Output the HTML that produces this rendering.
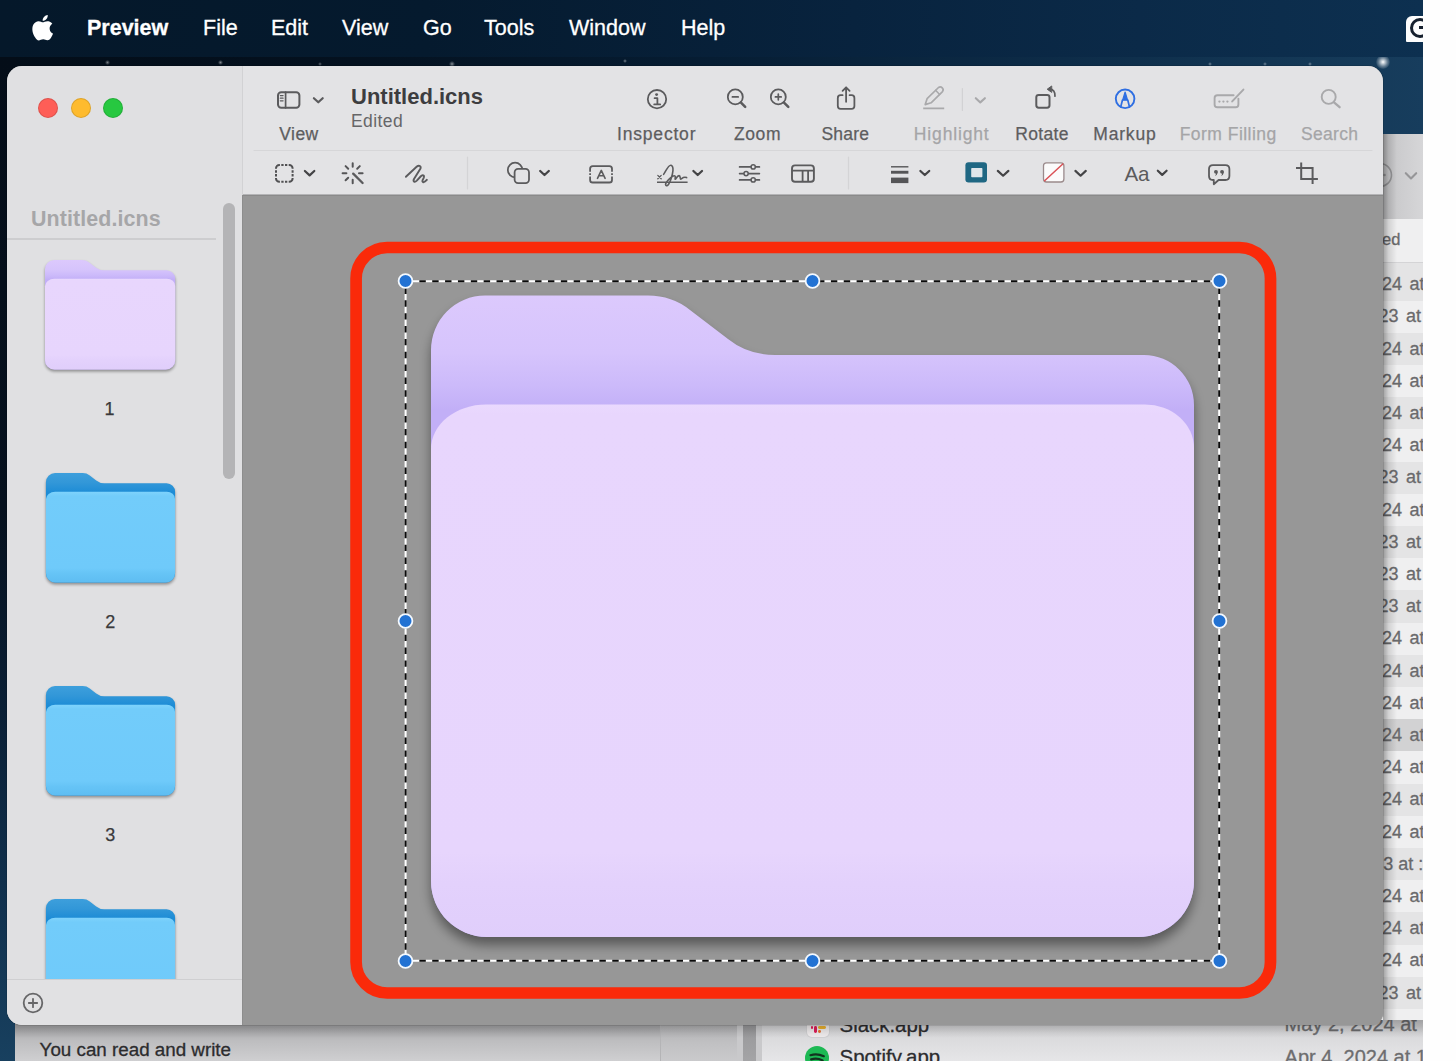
<!DOCTYPE html>
<html>
<head>
<meta charset="utf-8">
<title>Preview</title>
<style>
*{box-sizing:border-box;margin:0;padding:0}
html,body{width:1456px;height:1061px;overflow:hidden}
body{font-family:"Liberation Sans",sans-serif;background:#06182b;position:relative}
.abs{position:absolute}
#wall{left:0;top:0;width:1423px;height:1061px;background:linear-gradient(90deg,#030d18 0%,#04111f 25%,#061d33 50%,#0d2c48 75%,#143856 92%,#173d5d 100%)}
#wallL{left:0;top:56px;width:16px;height:1005px;background:linear-gradient(180deg,#040d18 0%,#06111e 45%,#0a1f35 65%,#11324f 85%,#18405f 100%)}
#menubar{left:0;top:0;width:1423px;height:56.5px;background:linear-gradient(90deg,#05182a 0%,#051a2e 30%,#08233e 60%,#0b2a48 80%,#0d3050 100%)}
#menubar span{position:absolute;top:16px;color:#fff;-webkit-text-stroke:.3px #fff;font-size:21.5px;line-height:24px;white-space:nowrap}
#whitestrip{left:1423px;top:0;width:33px;height:1061px;background:#fefefe}
/* finder behind */
#finderR{left:1370px;top:134px;width:53px;height:927px;background:#f4f4f5;overflow:hidden}
#finderB{left:15px;top:1020px;width:1408px;height:41px;background:#e9e9ea;overflow:hidden}
/* window */
#win{left:7px;top:66px;width:1376px;height:959px;border-radius:15px 15px 12px 15px;overflow:hidden;background:#979797;box-shadow:0 0 0 1px rgba(0,0,0,.10)}
#sidebar{left:0;top:0;width:235px;height:959px;background:#e0e0e2}
#toolbar{left:235px;top:0;width:1141px;height:129px;background:#e3e3e5;box-shadow:inset 1px 0 0 #d2d2d4,inset 0 -1px 0 #b4b4b6}
#canvas{left:235px;top:129px;width:1141px;height:830px;background:#979797;box-shadow:inset 1px 0 0 #8d8d8d,inset 0 1px 0 #8a8a8a}
.tl{position:absolute;top:32px;width:20px;height:20px;border-radius:50%;box-shadow:inset 0 0 0 1px rgba(0,0,0,.13)}
.lbl{position:absolute;-webkit-text-stroke:.25px currentColor;font-size:17.5px;line-height:20px;color:#5d5d5f;white-space:nowrap;transform:translateX(-50%)}
.dim{color:#a5a5a7}
.fr{font-size:18px;line-height:24px;color:#6a6a6c;white-space:nowrap;word-spacing:2.5px;-webkit-text-stroke:.3px currentColor}
.fb{line-height:24px;white-space:nowrap;-webkit-text-stroke:.3px currentColor}
</style>
</head>
<body>
<div id="wall" class="abs"></div>
<div id="wallL" class="abs"></div>
<div class="abs" style="left:104.5px;top:59.5px;width:5.0px;height:5.0px;border-radius:50%;background:radial-gradient(circle,rgba(255,255,255,0.45) 0,rgba(255,255,255,0.16) 45%,rgba(255,255,255,0) 75%)"></div>
<div class="abs" style="left:217.5px;top:59.5px;width:5.0px;height:5.0px;border-radius:50%;background:radial-gradient(circle,rgba(255,255,255,0.5) 0,rgba(255,255,255,0.17) 45%,rgba(255,255,255,0) 75%)"></div>
<div class="abs" style="left:318px;top:62px;width:4px;height:4px;border-radius:50%;background:radial-gradient(circle,rgba(255,255,255,0.35) 0,rgba(255,255,255,0.12) 45%,rgba(255,255,255,0) 75%)"></div>
<div class="abs" style="left:449px;top:61px;width:6px;height:6px;border-radius:50%;background:radial-gradient(circle,rgba(255,255,255,0.5) 0,rgba(255,255,255,0.17) 45%,rgba(255,255,255,0) 75%)"></div>
<div class="abs" style="left:623px;top:59px;width:4px;height:4px;border-radius:50%;background:radial-gradient(circle,rgba(255,255,255,0.45) 0,rgba(255,255,255,0.16) 45%,rgba(255,255,255,0) 75%)"></div>
<div class="abs" style="left:1208px;top:62px;width:4px;height:4px;border-radius:50%;background:radial-gradient(circle,rgba(255,255,255,0.4) 0,rgba(255,255,255,0.14) 45%,rgba(255,255,255,0) 75%)"></div>
<div class="abs" style="left:1263px;top:62px;width:4px;height:4px;border-radius:50%;background:radial-gradient(circle,rgba(255,255,255,0.4) 0,rgba(255,255,255,0.14) 45%,rgba(255,255,255,0) 75%)"></div>
<div class="abs" style="left:1308px;top:62px;width:4px;height:4px;border-radius:50%;background:radial-gradient(circle,rgba(255,255,255,0.4) 0,rgba(255,255,255,0.14) 45%,rgba(255,255,255,0) 75%)"></div>
<div class="abs" style="left:1375.5px;top:54.5px;width:14px;height:14px;border-radius:50%;background:radial-gradient(circle,rgba(255,255,255,1) 0,rgba(255,255,255,0.35) 45%,rgba(255,255,255,0) 75%)"></div>
<div id="menubar" class="abs">
  <svg class="abs" style="left:30.4px;top:15.2px" width="25.4" height="25.4" viewBox="0 0 24 24"><path fill="#fff" d="M12.152 6.896c-.948 0-2.415-1.078-3.96-1.04-2.04.027-3.91 1.183-4.961 3.014-2.117 3.675-.546 9.103 1.519 12.09 1.013 1.454 2.208 3.09 3.792 3.039 1.52-.065 2.09-.987 3.935-.987 1.831 0 2.35.987 3.96.948 1.637-.026 2.676-1.48 3.676-2.948 1.156-1.688 1.636-3.325 1.662-3.415-.039-.013-3.182-1.221-3.22-4.857-.026-3.04 2.48-4.494 2.597-4.559-1.429-2.09-3.623-2.324-4.39-2.376-2-.156-3.675 1.09-4.61 1.09zM15.53 3.83c.843-1.012 1.4-2.427 1.245-3.83-1.207.052-2.662.805-3.532 1.818-.78.896-1.454 2.338-1.273 3.714 1.338.104 2.715-.688 3.559-1.701"/></svg>
  <div class="abs" style="left:1405.6px;top:15.8px;width:17.4px;height:26.2px;background:#fdfdfd;border-radius:6px 0 0 1px;overflow:hidden"><div class="abs" style="left:4.6px;top:2.6px;width:20px;height:20px;border:3px solid #16202e;border-radius:50%"></div><div class="abs" style="left:13.5px;top:10.6px;width:6px;height:3px;background:#16202e"></div></div>
  <span style="left:87px;font-weight:bold">Preview</span>
  <span style="left:203px">File</span>
  <span style="left:271px">Edit</span>
  <span style="left:342px">View</span>
  <span style="left:423px">Go</span>
  <span style="left:484px">Tools</span>
  <span style="left:569px">Window</span>
  <span style="left:681px">Help</span>
</div>
<div id="finderR" class="abs">
<div class="abs" style="left:0;top:0;width:53px;height:84.5px;background:linear-gradient(90deg,#c4c4c6 0,#cacacc 45%,#d6d6d8 100%)"></div>
<svg class="abs" style="left:0;top:26px" width="53" height="30" viewBox="1370 160 53 30" fill="none" stroke="#969698" stroke-width="2.1" stroke-linecap="round" stroke-linejoin="round"><circle cx="1380" cy="175" r="11.5" stroke-width="1.6"/><circle cx="1384.5" cy="175" r="1.3" fill="#969698" stroke="none"/><path d="M1405.8 173.2L1411 178.4L1416.2 173.2"/></svg>
<div class="abs" style="left:0;top:84.5px;width:53px;height:44.5px;background:#efeff0;border-bottom:1.3px solid #d4d4d6"></div>
<div class="abs fr" style="left:12.1px;top:92.9px;font-size:16.5px;word-spacing:0">ed</div>
<div class="abs" style="left:0;top:129.0px;width:53px;height:37.6px;background:#e4e4e5"></div>
<div class="abs fr" style="left:12px;top:138.1px">24 at</div>
<div class="abs" style="left:0;top:166.6px;width:53px;height:32.2px;background:#efeff0"></div>
<div class="abs fr" style="left:8.5px;top:170.3px">23 at</div>
<div class="abs" style="left:0;top:198.8px;width:53px;height:32.2px;background:#e4e4e5"></div>
<div class="abs fr" style="left:12px;top:202.5px">24 at</div>
<div class="abs" style="left:0;top:231.0px;width:53px;height:32.2px;background:#efeff0"></div>
<div class="abs fr" style="left:12px;top:234.7px">24 at</div>
<div class="abs" style="left:0;top:263.2px;width:53px;height:32.2px;background:#e4e4e5"></div>
<div class="abs fr" style="left:12px;top:266.9px">24 at</div>
<div class="abs" style="left:0;top:295.4px;width:53px;height:32.2px;background:#efeff0"></div>
<div class="abs fr" style="left:12px;top:299.1px">24 at</div>
<div class="abs" style="left:0;top:327.6px;width:53px;height:32.2px;background:#e4e4e5"></div>
<div class="abs fr" style="left:8.5px;top:331.3px">23 at</div>
<div class="abs" style="left:0;top:359.8px;width:53px;height:32.2px;background:#efeff0"></div>
<div class="abs fr" style="left:12px;top:363.5px">24 at</div>
<div class="abs" style="left:0;top:392.0px;width:53px;height:32.2px;background:#e4e4e5"></div>
<div class="abs fr" style="left:8.5px;top:395.7px">23 at</div>
<div class="abs" style="left:0;top:424.2px;width:53px;height:32.2px;background:#efeff0"></div>
<div class="abs fr" style="left:8.5px;top:427.9px">23 at</div>
<div class="abs" style="left:0;top:456.4px;width:53px;height:32.2px;background:#e4e4e5"></div>
<div class="abs fr" style="left:8.5px;top:460.1px">23 at</div>
<div class="abs" style="left:0;top:488.6px;width:53px;height:32.2px;background:#efeff0"></div>
<div class="abs fr" style="left:12px;top:492.3px">24 at</div>
<div class="abs" style="left:0;top:520.8px;width:53px;height:32.2px;background:#e4e4e5"></div>
<div class="abs fr" style="left:12px;top:524.5px">24 at</div>
<div class="abs" style="left:0;top:553.0px;width:53px;height:32.2px;background:#efeff0"></div>
<div class="abs fr" style="left:12px;top:556.7px">24 at</div>
<div class="abs" style="left:0;top:585.2px;width:53px;height:32.2px;background:#d2d2d3"></div>
<div class="abs fr" style="left:12px;top:588.9px">24 at</div>
<div class="abs" style="left:0;top:617.4px;width:53px;height:32.2px;background:#efeff0"></div>
<div class="abs fr" style="left:12px;top:621.1px">24 at</div>
<div class="abs" style="left:0;top:649.6px;width:53px;height:32.2px;background:#e4e4e5"></div>
<div class="abs fr" style="left:12px;top:653.3px">24 at</div>
<div class="abs" style="left:0;top:681.8px;width:53px;height:32.2px;background:#efeff0"></div>
<div class="abs fr" style="left:12px;top:685.5px">24 at</div>
<div class="abs" style="left:0;top:714.0px;width:53px;height:32.2px;background:#e4e4e5"></div>
<div class="abs fr" style="left:3.2px;word-spacing:0;top:717.7px">23 at :</div>
<div class="abs" style="left:0;top:746.2px;width:53px;height:32.2px;background:#efeff0"></div>
<div class="abs fr" style="left:12px;top:749.9px">24 at</div>
<div class="abs" style="left:0;top:778.4px;width:53px;height:32.2px;background:#e4e4e5"></div>
<div class="abs fr" style="left:12px;top:782.1px">24 at</div>
<div class="abs" style="left:0;top:810.6px;width:53px;height:32.2px;background:#efeff0"></div>
<div class="abs fr" style="left:12px;top:814.3px">24 at</div>
<div class="abs" style="left:0;top:842.8px;width:53px;height:32.2px;background:#e4e4e5"></div>
<div class="abs fr" style="left:8.5px;top:846.5px">23 at</div>
<div class="abs" style="left:0;top:875.0px;width:53px;height:32.2px;background:#efeff0"></div>
<div class="abs" style="left:0;top:907.2px;width:53px;height:32.2px;background:#e4e4e5"></div>
<div class="abs" style="left:13px;top:0;width:14px;height:927px;background:linear-gradient(90deg,rgba(0,0,0,.33),rgba(0,0,0,.12) 40%,rgba(0,0,0,0))"></div>
</div>
<div id="finderB" class="abs">
  <div class="abs" style="left:0;top:0;width:645px;height:41px;background:linear-gradient(180deg,#a2a2a4 0,#a6a6a8 18%,#bdbdbf 50%,#cfcfd1 100%)"></div>
  <div class="abs" style="left:645px;top:0;width:83px;height:41px;background:linear-gradient(180deg,#a8a8aa 0,#b4b4b6 22%,#c0c0c2 55%,#cacacc 100%);border-left:1px solid #b4b4b6"></div>
  <div class="abs" style="left:722px;top:0;width:26px;height:41px;background:#c9c9cb"></div>
  <div class="abs" style="left:728.3px;top:0;width:12.4px;height:41px;background:linear-gradient(180deg,#969698,#a4a4a6)"></div>
  <div class="abs" style="left:747px;top:0;width:661px;height:41px;background:linear-gradient(180deg,#cfcfd1 0,#d8d8da 30%,#e6e6e8 100%)"></div>
  <div class="abs fb" style="left:24.6px;top:17.6px;font-size:18.8px;color:#2c2c2e">You can read and write</div>
  <div class="abs" style="left:792px;top:-5px;width:22px;height:22.4px;border-radius:5px;background:#efeced;box-shadow:0 0 0 1px #d0d0d2"></div>
  <div class="abs" style="left:795.6px;top:6.2px;width:2.6px;height:2.6px;background:#e01e5a;border-radius:1.3px"></div>
  <div class="abs" style="left:799.4px;top:6.2px;width:2.8px;height:6.6px;background:#e01e5a;border-radius:1.4px"></div>
  <div class="abs" style="left:803.4px;top:6.2px;width:7.4px;height:2.8px;background:#ecb22e;border-radius:1.4px"></div>
  <div class="abs" style="left:803.4px;top:10px;width:2.8px;height:2.8px;background:#e9722e;border-radius:1.4px"></div>
  <div class="abs fb" style="left:824.6px;top:-6.6px;font-size:20.4px;color:#2c2c2e">Slack.app</div>
  <div class="abs" style="left:790px;top:25.6px;width:24px;height:24px;border-radius:50%;background:#1db954"></div>
  <svg class="abs" style="left:790px;top:25.6px" width="24" height="24" viewBox="0 0 24 24" fill="none" stroke="#12321f" stroke-width="2.2" stroke-linecap="round"><path d="M5.5 9.2Q12 7 18.8 10.2M6.2 13.4Q12 11.6 17.6 14.4"/></svg>
  <div class="abs fb" style="left:824.6px;top:25px;font-size:20.4px;color:#2c2c2e">Spotify.app</div>
  <div class="abs fb" style="left:1269.6px;top:-8.5px;font-size:20px;color:#6d6d6f">May 2, 2024 at</div>
  <div class="abs fb" style="left:1269.6px;top:24.5px;font-size:20px;color:#6d6d6f">Apr 4, 2024 at 1</div>
  <div class="abs" style="left:0;top:0;width:1408px;height:18px;background:linear-gradient(180deg,rgba(0,0,0,.22) 0,rgba(0,0,0,.16) 35%,rgba(0,0,0,.05) 75%,rgba(0,0,0,0) 100%)"></div>
</div>
<div id="whitestrip" class="abs"></div>

<div id="win" class="abs">
  <div id="sidebar" class="abs">
    <div class="tl" style="left:31px;background:#fe5e57"></div>
    <div class="tl" style="left:64px;background:#febb2e"></div>
    <div class="tl" style="left:96px;background:#27c840"></div>
    <div class="abs" style="left:24px;top:140.6px;font-size:21.4px;line-height:24px;font-weight:bold;color:#a6a6a8;letter-spacing:.1px">Untitled.icns</div>
    <div class="abs" style="left:0;top:172.4px;width:209px;height:1.5px;background:#cdcdcf"></div>
    <div class="abs" style="left:215.5px;top:137px;width:12.5px;height:276px;border-radius:7px;background:#b4b4b6"></div>
    <svg class="abs" width="0" height="0" style="left:0;top:0"><defs>
      <linearGradient id="bBack" x1="0" y1="295" x2="0" y2="410" gradientUnits="userSpaceOnUse"><stop offset="0" stop-color="#3d9fdc"/><stop offset=".5" stop-color="#3297d8"/><stop offset="1" stop-color="#1d8cd6"/></linearGradient>
      <linearGradient id="bFront" x1="0" y1="404" x2="0" y2="937" gradientUnits="userSpaceOnUse"><stop offset="0" stop-color="#7fd3fc"/><stop offset=".05" stop-color="#72ccfa"/><stop offset=".84" stop-color="#6fcafa"/><stop offset=".9" stop-color="#66c4f6"/><stop offset="1" stop-color="#5ebdf2"/></linearGradient>
      <filter id="tsh" x="-10%" y="-10%" width="120%" height="130%"><feGaussianBlur stdDeviation="9"/><feOffset dy="10"/></filter>
    </defs></svg>
    <svg class="abs" style="left:32.4px;top:188.3px" width="142.2" height="121" viewBox="396 260 833 709.1">
      <path d="M431 350 A54 54.5 0 0 1 485 295.5 L648 295.5 Q672 295.5 690 310 L728 339 Q748 355 775 355 L1144 355 A50 50 0 0 1 1194 405 L1194 881 A56 56 0 0 1 1138 937 L487 937 A56 56 0 0 1 431 881 Z" fill="#000" opacity=".38" filter="url(#tsh)"/>
      <path d="M431 350 A54 54.5 0 0 1 485 295.5 L648 295.5 Q672 295.5 690 310 L728 339 Q748 355 775 355 L1144 355 A50 50 0 0 1 1194 405 L1194 881 A56 56 0 0 1 1138 937 L487 937 A56 56 0 0 1 431 881 Z" fill="url(#gBack)"/>
      <path d="M431 449 A55 44.5 0 0 1 486 404.5 L1145 404.5 A49 43.5 0 0 1 1194 448 L1194 881 A56 56 0 0 1 1138 937 L487 937 A56 56 0 0 1 431 881 Z" fill="url(#gFront)"/>
    </svg>
    <div class="lbl" style="left:102.5px;top:333px;color:#3a3a3c;font-size:18px">1</div>
    <svg class="abs" style="left:33.2px;top:401.3px" width="141" height="121" viewBox="396 260 833 709.1" preserveAspectRatio="none">
      <path d="M431 350 A54 54.5 0 0 1 485 295.5 L648 295.5 Q672 295.5 690 310 L728 339 Q748 355 775 355 L1144 355 A50 50 0 0 1 1194 405 L1194 881 A56 56 0 0 1 1138 937 L487 937 A56 56 0 0 1 431 881 Z" fill="#000" opacity=".38" filter="url(#tsh)"/>
      <path d="M431 350 A54 54.5 0 0 1 485 295.5 L648 295.5 Q672 295.5 690 310 L728 339 Q748 355 775 355 L1144 355 A50 50 0 0 1 1194 405 L1194 881 A56 56 0 0 1 1138 937 L487 937 A56 56 0 0 1 431 881 Z" fill="url(#bBack)"/>
      <path d="M431 449 A55 44.5 0 0 1 486 404.5 L1145 404.5 A49 43.5 0 0 1 1194 448 L1194 881 A56 56 0 0 1 1138 937 L487 937 A56 56 0 0 1 431 881 Z" fill="url(#bFront)"/>
    </svg>
    <div class="lbl" style="left:103.2px;top:546px;color:#3a3a3c;font-size:18px">2</div>
    <svg class="abs" style="left:33.2px;top:614.3px" width="141" height="121" viewBox="396 260 833 709.1" preserveAspectRatio="none">
      <path d="M431 350 A54 54.5 0 0 1 485 295.5 L648 295.5 Q672 295.5 690 310 L728 339 Q748 355 775 355 L1144 355 A50 50 0 0 1 1194 405 L1194 881 A56 56 0 0 1 1138 937 L487 937 A56 56 0 0 1 431 881 Z" fill="#000" opacity=".38" filter="url(#tsh)"/>
      <path d="M431 350 A54 54.5 0 0 1 485 295.5 L648 295.5 Q672 295.5 690 310 L728 339 Q748 355 775 355 L1144 355 A50 50 0 0 1 1194 405 L1194 881 A56 56 0 0 1 1138 937 L487 937 A56 56 0 0 1 431 881 Z" fill="url(#bBack)"/>
      <path d="M431 449 A55 44.5 0 0 1 486 404.5 L1145 404.5 A49 43.5 0 0 1 1194 448 L1194 881 A56 56 0 0 1 1138 937 L487 937 A56 56 0 0 1 431 881 Z" fill="url(#bFront)"/>
    </svg>
    <div class="lbl" style="left:103.2px;top:759px;color:#3a3a3c;font-size:18px">3</div>
    <svg class="abs" style="left:33.2px;top:827.3px" width="141" height="86" viewBox="396 260 833 504.0" preserveAspectRatio="none">
      <path d="M431 350 A54 54.5 0 0 1 485 295.5 L648 295.5 Q672 295.5 690 310 L728 339 Q748 355 775 355 L1144 355 A50 50 0 0 1 1194 405 L1194 881 A56 56 0 0 1 1138 937 L487 937 A56 56 0 0 1 431 881 Z" fill="#000" opacity=".38" filter="url(#tsh)"/>
      <path d="M431 350 A54 54.5 0 0 1 485 295.5 L648 295.5 Q672 295.5 690 310 L728 339 Q748 355 775 355 L1144 355 A50 50 0 0 1 1194 405 L1194 881 A56 56 0 0 1 1138 937 L487 937 A56 56 0 0 1 431 881 Z" fill="url(#bBack)"/>
      <path d="M431 449 A55 44.5 0 0 1 486 404.5 L1145 404.5 A49 43.5 0 0 1 1194 448 L1194 881 A56 56 0 0 1 1138 937 L487 937 A56 56 0 0 1 431 881 Z" fill="url(#bFront)"/>
    </svg>
    <div class="abs" style="left:0;top:912.5px;width:235px;height:47px;background:#e1e1e3;border-top:1px solid #cfcfd1"></div>
    <svg class="abs" style="left:15px;top:926px" width="22" height="22" viewBox="0 0 22 22"><circle cx="11" cy="11" r="9.3" fill="none" stroke="#666668" stroke-width="1.8"/><path d="M6.8 11H15.2M11 6.8V15.2" stroke="#666668" stroke-width="1.8" stroke-linecap="round"/></svg>

  </div>
  <div id="toolbar" class="abs">
  <svg class="abs" style="left:-1px;top:0" width="1142" height="129" viewBox="241 66 1142 129" fill="none" stroke="#5b5b5d" stroke-width="1.8" stroke-linecap="round" stroke-linejoin="round">
    <!-- row1 divider -->
    <path d="M254 150.5H1372" stroke="#d6d6d8" stroke-width="1.2"/>
    <!-- sidebar toggle -->
    <rect x="278" y="92.2" width="21.4" height="15.6" rx="3.2" stroke-width="2"/>
    <path d="M285.6 92.2V107.8" stroke-width="1.7"/>
    <path d="M280.3 95.6H283.1M280.3 98.2H283.1M280.3 100.8H283.1" stroke-width="1.2"/>
    <path d="M313.9 98.2 L318.3 102.3 L322.7 98.2" stroke="#5b5b5d" stroke-width="2.2" fill="none" stroke-linecap="round" stroke-linejoin="round"/>
    <!-- inspector -->
    <circle cx="657" cy="99.2" r="9.2"/>
    <circle cx="656.6" cy="94.6" r="1.45" fill="#5b5b5d" stroke="none"/>
    <path d="M654.6 98.2H657.4V104.2M654.2 104.4H660.2" stroke-width="1.8"/>
    <!-- zoom out / in -->
    <circle cx="735.3" cy="96.9" r="7.5"/>
    <path d="M741 102.6L745.2 106.9" stroke-width="2.5"/>
    <path d="M732.4 96.9H738.2" stroke-width="1.7"/>
    <circle cx="778.3" cy="96.9" r="7.5"/>
    <path d="M784 102.6L788.3 106.9" stroke-width="2.5"/>
    <path d="M775.4 96.9H781.2M778.3 94V99.8" stroke-width="1.7"/>
    <!-- share -->
    <path d="M842.6 95.2H840.6Q837.8 95.2 837.8 98V106Q837.8 108.8 840.6 108.8H851.6Q854.4 108.8 854.4 106V98Q854.4 95.2 851.6 95.2H849.6"/>
    <path d="M846.1 101.8V87.6M842.6 90.8L846.1 87.3L849.6 90.8"/>
    <!-- highlight (dim) -->
    <g stroke="#a9a9ab" stroke-width="1.7">
      <path d="M925.2 104.6L927.1 98.7L938.5 87.5A2.9 2.9 0 0 1 942.5 91.6L931.1 102.8Z"/>
      <path d="M935.6 90.3L939.6 94.4" stroke-width="1.5"/>
      <path d="M923.2 108.4H944.2" stroke-width="1.9" stroke-linecap="butt"/>
    </g>
    <path d="M962.4 88.5V110.5" stroke="#d2d2d4" stroke-width="1.2"/>
    <path d="M975.8 98.2 L980.3 102.4 L984.9 98.2" stroke="#a9a9ab" stroke-width="2.1" fill="none" stroke-linecap="round" stroke-linejoin="round"/>
    <!-- rotate -->
    <rect x="1036.3" y="94.9" width="13.2" height="12.8" rx="2.4" stroke-width="2"/>
    <path d="M1055 96.2Q1055.2 89.3 1049.6 89.2" stroke-width="1.7"/>
    <path d="M1051.4 86.2L1047.2 89.2L1051.4 92.2Z" fill="#5b5b5d" stroke-width="1"/>
    <!-- markup -->
    <g stroke="#2f6fe2" stroke-width="1.9">
      <circle cx="1125.1" cy="98.8" r="9.3"/>
      <path d="M1122.4 100.2L1120.7 107M1127.8 100.2L1129.5 107" stroke-width="1.7"/>
      <path d="M1125.1 92L1122.6 100.2H1127.6Z" fill="#2f6fe2" stroke-width="1.2"/>
    </g>
    <!-- form filling (dim) -->
    <g stroke="#a9a9ab" stroke-width="1.9">
      <path d="M1233.6 95.3H1217.4Q1214.6 95.3 1214.6 98.1V104.5Q1214.6 107.3 1217.4 107.3H1235.6Q1238.4 107.3 1238.4 104.5V98.6"/>
      <path d="M1232.2 101.4L1243.4 89.6" stroke-width="2"/>
      <circle cx="1219.4" cy="101.6" r="1.15" fill="#a9a9ab" stroke="none"/><circle cx="1223.4" cy="101.6" r="1.15" fill="#a9a9ab" stroke="none"/><circle cx="1227.4" cy="101.6" r="1.15" fill="#a9a9ab" stroke="none"/>
    </g>
    <!-- search (dim) -->
    <g stroke="#a9a9ab" stroke-width="1.9"><circle cx="1328.7" cy="96.9" r="7"/><path d="M1334 102.3L1339.6 107.2" stroke-width="2.3"/></g>

    <!-- ===== row 2 ===== -->
    <path d="M276 168.8V168.3A3.4 3.4 0 0 1 279.4 164.9H279.9M288.70000000000005 164.9H289.20000000000005A3.4 3.4 0 0 1 292.6 168.3V168.8M292.6 177.9V178.4A3.4 3.4 0 0 1 289.20000000000005 181.8H288.70000000000005M279.9 181.8H279.4A3.4 3.4 0 0 1 276 178.4V177.9M281.30 164.9h2.3M285.00 164.9h2.3M281.30 181.8h2.3M285.00 181.8h2.3M276 170.30v2.35M276 174.05v2.35M292.6 170.30v2.35M292.6 174.05v2.35" stroke="#505052" stroke-width="2" stroke-linecap="butt"/>
    <path d="M304.9 171 L309.6 175.4 L314.3 171" stroke="#444446" stroke-width="2.2" fill="none" stroke-linecap="round" stroke-linejoin="round"/>
    <!-- wand -->
    <path d="M353.2 173.6L362.6 183" stroke-width="2.3"/>
    <path d="M352.7 163.2V166.8M352.7 179.8V183.2M342.6 173.2H346.4M359 173.2H362.6M345.6 166.1L348.2 168.7M359.8 166.1L357.2 168.7M345.6 180.3L348.2 177.7" stroke-width="2" stroke="#555557"/>
    <!-- sketch -->
    <path d="M405.9 176.8L416.6 166.8C419 164.6 421.7 166 420.2 169L414 179C412.7 181.6 414.7 182.7 416.8 180.6L420.6 176.5C422.6 174.3 424.7 175.4 423.7 177.8L422.5 180.4C421.9 182.2 423.5 182.7 424.9 181.6L426.9 179.8" stroke-width="1.9"/>
    <path d="M467.5 157V189" stroke="#d4d4d6" stroke-width="1.2"/>
    <!-- shapes -->
    <circle cx="515.1" cy="170" r="7.3" stroke-width="1.8"/>
    <rect x="514.6" y="168.9" width="14.4" height="14.2" rx="3.5" fill="#e3e3e5" stroke-width="1.8"/>
    <path d="M540.2 171 L544.5 175 L548.8 171" stroke="#444446" stroke-width="2.3" fill="none" stroke-linecap="round" stroke-linejoin="round"/>
    <!-- text box -->
    <path d="M590.1 171.8V168.8Q590.1 166.2 592.7 166.2H609.4Q612 166.2 612 168.8V171.8M590.1 176.6V179.9Q590.1 182.5 592.7 182.5H609.4Q612 182.5 612 179.9V176.6" stroke-width="1.8" stroke-linecap="butt"/>
    <path d="M589.2 174.1H591M611.1 174.1H612.9" stroke-width="1.6" stroke-linecap="butt"/>
    <path d="M597.5 178.4L601.3 170.4L605.1 178.4M598.9 175.7H603.7" stroke-width="1.6"/>
    <!-- signature -->
    <path d="M657 182.2H687.6" stroke-width="1.6" stroke-linecap="butt"/>
    <path d="M657.8 175.4L661.2 178.8M661.2 175.4L657.8 178.8" stroke-width="1.3"/>
    <path d="M663.6 174.4C666 171 668.4 164.6 671 165.2C674.4 166.2 672.8 174 671 179C669.6 183.2 667.6 186.4 666.2 185.6C664.4 184.4 667 181 669.4 178.8C671.8 176.6 674.2 175.2 675 176C675.8 176.8 674.8 178.6 675.2 179.2C676 179.4 677 175.6 679 175.6C680.6 175.8 680 178.8 680.6 179.2C681.6 179.2 683 176.2 686.6 177.6" stroke-width="1.6"/>
    <path d="M693.4 171 L697.7 175 L702 171" stroke="#444446" stroke-width="2.3" fill="none" stroke-linecap="round" stroke-linejoin="round"/>
    <!-- sliders -->
    <path d="M739.6 166.9H759.4M739.6 173.6H759.4M739.6 179.9H759.4" stroke-width="1.7"/>
    <g fill="#e3e3e5" stroke-width="1.5"><circle cx="753.2" cy="166.9" r="2.1"/><circle cx="746.1" cy="173.6" r="2.1"/><circle cx="753.2" cy="179.9" r="2.1"/></g>
    <!-- layout -->
    <rect x="792" y="165.4" width="21.9" height="16.4" rx="3" stroke-width="1.9"/>
    <path d="M792 170.6H813.9M802.6 170.6V181.8M808.1 170.6V181.8" stroke-width="1.8" stroke-linecap="butt"/>
    <path d="M848.5 157V189" stroke="#d4d4d6" stroke-width="1.2"/>
    <!-- line weights -->
    <g stroke="none" fill="#555557"><rect x="891" y="166.1" width="17.4" height="1.4"/><rect x="891" y="170.8" width="17.4" height="2.9"/><rect x="891" y="177.6" width="17.4" height="5.5"/></g>
    <path d="M920.4 171 L924.8 175 L929.2 171" stroke="#444446" stroke-width="2.3" fill="none" stroke-linecap="round" stroke-linejoin="round"/>
    <!-- border colour -->
    <rect x="965.4" y="162.2" width="21.6" height="20.3" rx="3.2" fill="#1f6783" stroke="none"/>
    <rect x="971.2" y="168" width="11.2" height="9.2" rx=".8" fill="#dfe6ea" stroke="none"/>
    <path d="M997.8 170.9 L1003.1 175.7 L1008.4 170.9" stroke="#444446" stroke-width="2.2" fill="none" stroke-linecap="round" stroke-linejoin="round"/>
    <!-- fill colour -->
    <rect x="1043.5" y="162.8" width="20.4" height="19.2" rx="3" fill="#fbfbfb" stroke="#9a8a8b" stroke-width="1.3"/>
    <path d="M1044.6 180.8L1062.8 164" stroke="#da5257" stroke-width="1.5"/>
    <path d="M1075.4 170.9 L1080.6 175.7 L1085.8 170.9" stroke="#444446" stroke-width="2.2" fill="none" stroke-linecap="round" stroke-linejoin="round"/>
    <path d="M1157.8 170.7 L1162.2 174.9 L1166.6 170.7" stroke="#444446" stroke-width="2.2" fill="none" stroke-linecap="round" stroke-linejoin="round"/>
    <!-- speech bubble -->
    <path d="M1213 165.1H1225.4Q1229.4 165.1 1229.4 169.1V176Q1229.4 180 1225.4 180H1218.6L1213.8 184.2V180H1213Q1209 180 1209 176V169.1Q1209 165.1 1213 165.1Z" stroke-width="1.8"/>
    <g fill="#5b5b5d" stroke="none"><path d="M1214 172a1.95 1.95 0 1 1 3.85 .45q-.5 2.4-3 3.6q1.15-1.45 1.1-2.35a1.95 1.95 0 0 1-1.95-1.7z"/><path d="M1220.1 172a1.95 1.95 0 1 1 3.85 .45q-.5 2.4-3 3.6q1.15-1.45 1.1-2.35a1.95 1.95 0 0 1-1.95-1.7z"/></g>
    <!-- crop -->
    <path d="M1301.2 162.6V178.9H1317.9M1296 167.9H1312.6V184.1" stroke-width="2" stroke-linecap="butt" stroke-linejoin="miter"/>
  </svg>
  <div class="abs" style="left:109px;top:19.4px;font-size:22px;line-height:24px;font-weight:bold;color:#3d3d3f;letter-spacing:0;white-space:nowrap">Untitled.icns</div>
  <div class="abs" style="left:109px;top:45px;font-size:17.5px;line-height:20px;color:#666668;letter-spacing:.4px;white-space:nowrap">Edited</div>
  <div class="lbl" id="l1" style="left:56.8px;top:58px;letter-spacing:0.44px;margin-left:0.22px">View</div>
  <div class="lbl" id="l2" style="left:414.3px;top:58px;letter-spacing:0.80px;margin-left:0.40px">Inspector</div>
  <div class="lbl" id="l3" style="left:515.3px;top:58px;letter-spacing:0.57px;margin-left:0.28px">Zoom</div>
  <div class="lbl" id="l4" style="left:603.2px;top:58px;letter-spacing:0.17px;margin-left:0.08px">Share</div>
  <div class="lbl dim" id="l5" style="left:709.3px;top:58px;letter-spacing:0.85px;margin-left:0.42px">Highlight</div>
  <div class="lbl" id="l6" style="left:799.9px;top:58px;letter-spacing:0.36px;margin-left:0.18px">Rotate</div>
  <div class="lbl" id="l7" style="left:882.5px;top:58px;letter-spacing:0.79px;margin-left:0.40px">Markup</div>
  <div class="lbl dim" id="l8" style="left:986.0px;top:58px;letter-spacing:0.47px;margin-left:0.23px">Form Filling</div>
  <div class="lbl dim" id="l9" style="left:1087.5px;top:58px;letter-spacing:0.35px;margin-left:0.17px">Search</div>
  <div class="abs" style="left:882.6px;top:96.2px;font-size:20.6px;line-height:24px;color:#5b5b5d;white-space:nowrap;letter-spacing:-.3px">Aa</div>
</div>
  <div id="canvas" class="abs">
  <svg class="abs" style="left:-1px;top:0" width="1142" height="830" viewBox="241 195 1142 830">
    <defs>
      <linearGradient id="gBack" x1="0" y1="295" x2="0" y2="410" gradientUnits="userSpaceOnUse">
        <stop offset="0" stop-color="#dcc9fd"/><stop offset=".5" stop-color="#d6c4fc"/><stop offset=".78" stop-color="#ccbafa"/><stop offset="1" stop-color="#c2aff7"/>
      </linearGradient>
      <linearGradient id="gFront" x1="0" y1="404" x2="0" y2="937" gradientUnits="userSpaceOnUse">
        <stop offset="0" stop-color="#ead9fe"/><stop offset=".02" stop-color="#e8d6fd"/><stop offset=".84" stop-color="#e7d5fd"/><stop offset=".9" stop-color="#e3d1fc"/><stop offset="1" stop-color="#e0cefb"/>
      </linearGradient>
      <filter id="fsh" x="-10%" y="-10%" width="120%" height="125%">
        <feGaussianBlur in="SourceAlpha" stdDeviation="6"/><feOffset dy="7.5"/>
        <feComponentTransfer><feFuncA type="linear" slope=".42"/></feComponentTransfer>
      </filter>
    </defs>
    <!-- red annotation -->
    <rect x="356.1" y="247.5" width="914.4" height="745.5" rx="31" ry="31" fill="none" stroke="#fa2a0a" stroke-width="11.7"/>
    <!-- folder shadow -->
    <path filter="url(#fsh)" d="M431 350 A54 54.5 0 0 1 485 295.5 L648 295.5 Q672 295.5 690 310 L728 339 Q748 355 775 355 L1144 355 A50 50 0 0 1 1194 405 L1194 881 A56 56 0 0 1 1138 937 L487 937 A56 56 0 0 1 431 881 Z" fill="#000"/>
    <!-- folder back -->
    <path d="M431 350 A54 54.5 0 0 1 485 295.5 L648 295.5 Q672 295.5 690 310 L728 339 Q748 355 775 355 L1144 355 A50 50 0 0 1 1194 405 L1194 881 A56 56 0 0 1 1138 937 L487 937 A56 56 0 0 1 431 881 Z" fill="url(#gBack)"/>
    <!-- folder front -->
    <path d="M431 449 A55 44.5 0 0 1 486 404.5 L1145 404.5 A49 43.5 0 0 1 1194 448 L1194 881 A56 56 0 0 1 1138 937 L487 937 A56 56 0 0 1 431 881 Z" fill="url(#gFront)"/>
    <!-- selection -->
    <path d="M405.6 281.25H1219.2V960.85H405.6Z" fill="none" stroke="#fff" stroke-width="2"/>
    <g fill="none" stroke="#0a0a0a" stroke-width="2" stroke-dasharray="6.43 6.43">
      <path d="M405.6 281.25H1219.2" stroke-dashoffset="-0.9"/><path d="M405.6 960.85H1219.2" stroke-dashoffset="-0.9"/>
      <path d="M405.6 281.25V960.85" stroke-dashoffset="-6.2"/><path d="M1219.2 281.25V960.85" stroke-dashoffset="-6.2"/>
    </g>
    <g fill="#2272d3" stroke="#f4f9ff" stroke-width="1.8">
      <circle cx="405.5" cy="281" r="6.9"/><circle cx="812.5" cy="281" r="6.9"/><circle cx="1219.5" cy="281" r="6.9"/>
      <circle cx="405.5" cy="621" r="6.9"/><circle cx="1219.5" cy="621" r="6.9"/>
      <circle cx="405.5" cy="961" r="6.9"/><circle cx="812.5" cy="961" r="6.9"/><circle cx="1219.5" cy="961" r="6.9"/>
    </g>
  </svg>
  </div>
</div>
</body>
</html>
